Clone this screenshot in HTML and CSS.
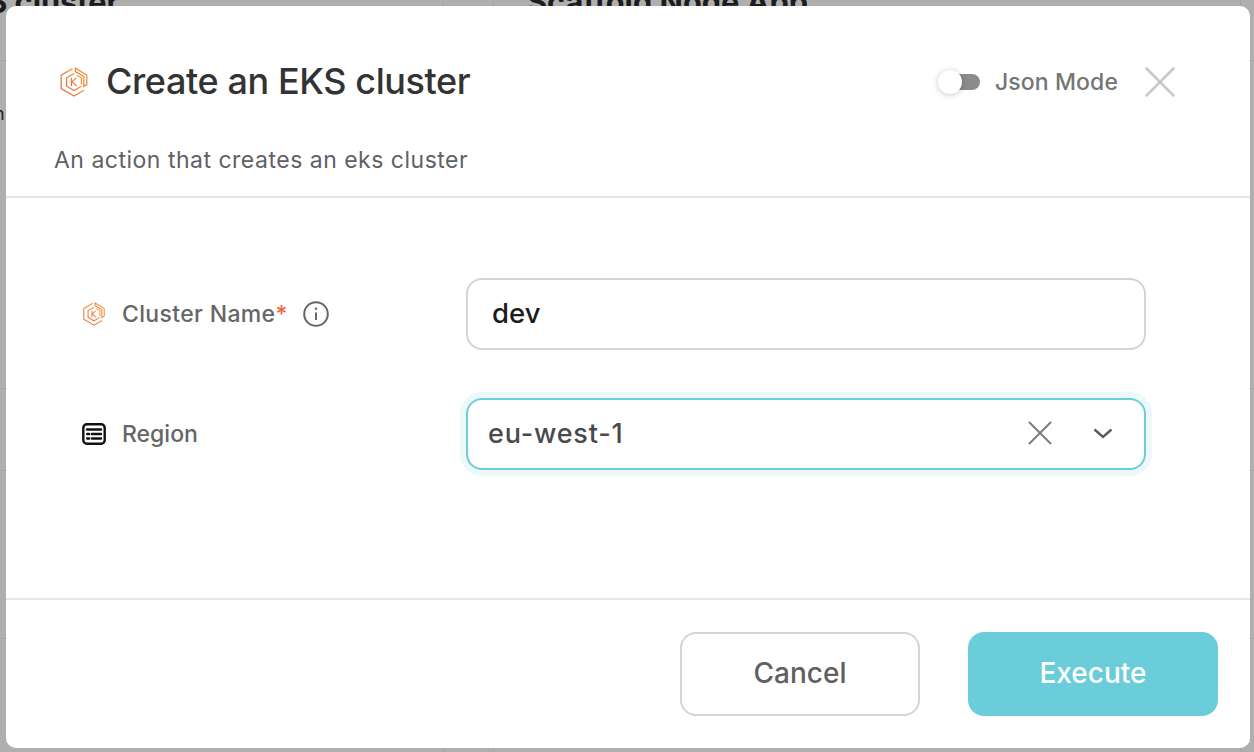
FILE: index.html
```html
<!DOCTYPE html>
<html lang="en">
<head>
<meta charset="utf-8">
<title>Create an EKS cluster</title>
<link rel="stylesheet" href="styles.css">
</head>
<body>
<div class="backdrop">
  <span class="bg-text bg-text-left">EKS cluster</span>
  <span class="bg-text bg-text-mid">Scaffold Node App</span>
  <span class="bg-frag">n</span>
  <i class="bg-v bg-v1"></i><i class="bg-v bg-v2"></i><i class="bg-v bg-v3"></i>
  <i class="bg-h bg-h1"></i><i class="bg-h bg-h2"></i><i class="bg-h bg-h3"></i><i class="bg-h bg-h4"></i>
</div>
<svg class="defs" width="0" height="0" aria-hidden="true">
  <defs>
    <linearGradient id="eks" x1="0" y1="1" x2="1" y2="0">
      <stop offset="0" stop-color="#e8694a"/>
      <stop offset="1" stop-color="#f9a63c"/>
    </linearGradient>
    <symbol id="eks-logo" viewBox="0 0 30 30">
      <path d="M13.6 1.600 2.200 8.200v13.400l12.800 7.400 10-5.800" fill="none" stroke="url(#eks)" stroke-width="1.300"/>
      <path d="M16.400 1.200v3.400l8.400 4.800v10l3-1.800V8.200z" fill="none" stroke="url(#eks)" stroke-width="1.300"/>
      <path d="M15 6.600 7.600 10.800v8.400l7.400 4.300 7.400-4.300M22.400 17.500v-6.700l-4.500-2.600" fill="none" stroke="url(#eks)" stroke-width="1.300"/>
      <path d="M12.400 10.800v8.200M17.400 10.800l-4.400 4 4.600 4.200" fill="none" stroke="url(#eks)" stroke-width="1.300"/>
    </symbol>
  </defs>
</svg>
<main class="modal">
  <header class="head">
    <div class="title-row">
      <svg class="logo-lg"><use href="#eks-logo"/></svg>
      <h1 class="title">Create an EKS cluster</h1>
      <div class="json-mode">
        <span class="switch"><span class="knob"></span></span>
        <span class="json-label">Json Mode</span>
      </div>
      <svg class="close" viewBox="0 0 30 30"><path d="M1.500 1.500 28.500 28.500M28.500 1.500 1.500 28.500"/></svg>
    </div>
    <p class="desc">An action that creates an eks cluster</p>
  </header>
  <section class="form">
    <div class="field">
      <label class="label">
        <svg class="logo-sm"><use href="#eks-logo"/></svg>
        <span class="label-name">Cluster Name<em class="req">*</em></span>
        <svg class="info" viewBox="0 0 26 26"><circle cx="13" cy="13" r="11.800"/><path d="M13 11.500V19"/><circle class="dot" cx="13" cy="7.800" r="1.200"/></svg>
      </label>
      <div class="input input-text">dev</div>
    </div>
    <div class="field">
      <label class="label">
        <svg class="list-ic" viewBox="0 0 24 24"><rect x="1.300" y="2.300" width="21.400" height="19.400" rx="3.500"/><path d="M5 7.500h14M10 12h9M10 16.500h9M5.200 12h2M5.200 16.500h2"/></svg>
        <span>Region</span>
      </label>
      <div class="input select">
        <span class="select-value">eu-west-1</span>
        <svg class="clear" viewBox="0 0 24 24"><path d="M1 1 23 23M23 1 1 23"/></svg>
        <svg class="chev" viewBox="0 0 20 11"><path d="M1.500 1.500 10 9 18.500 1.500"/></svg>
      </div>
    </div>
  </section>
  <footer class="foot">
    <button class="btn btn-cancel" type="button">Cancel</button>
    <button class="btn btn-exec" type="button">Execute</button>
  </footer>
</main>
</body>
</html>
```
FILE: styles.css
```css
* { box-sizing: border-box; }
html, body { margin: 0; height: 100%; }
body {
  width: 1254px;
  height: 752px;
  overflow: hidden;
  position: relative;
  background: #afafaf;
  font-family: "Inter", "Liberation Sans", sans-serif;
  color: #333;
}
.defs { position: absolute; }
.backdrop { position: absolute; inset: 0; overflow: hidden; }
.bg-text { position: absolute; top: -15px; font-weight: 700; font-size: 30.700px; line-height: 34px; color: #1c1c1c; white-space: nowrap; }
.bg-text-left { right: 1135px; }
.bg-text-mid { left: 527px; }
.bg-frag { position: absolute; left: -6px; top: 104px; font-size: 18px; line-height: 20px; color: #222; }
.bg-v { position: absolute; top: 0; bottom: 0; width: 1px; background: #a4a4a8; }
.bg-v1 { left: 443px; }
.bg-v2 { left: 493px; }
.bg-v3 { left: 1240px; }
.bg-h { position: absolute; left: 0; right: 0; height: 1px; background: #a4a4a8; }
.bg-h1 { top: 60px; }
.bg-h2 { top: 388px; }
.bg-h3 { top: 470px; }
.bg-h4 { top: 638px; }

.modal {
  position: absolute;
  left: 6px;
  top: 6px;
  width: 1244px;
  height: 742px;
  background: #fff;
  border-radius: 10px;
  display: flex;
  flex-direction: column;
}
.head {
  height: 192px;
  border-bottom: 2px solid #e6e6e8;
  padding: 0 48px;
}
.title-row {
  display: flex;
  align-items: center;
  height: 104px;
  padding-top: 48px;
}
.logo-lg { width: 30px; height: 30px; margin-left: 5px; flex: none; }
.title {
  margin: 0 0 2px 17px;
  font-size: 36px;
  font-weight: 500;
  letter-spacing: -0.4px;
  color: #333;
  flex: 1;
  white-space: nowrap;
}
.json-mode { display: flex; align-items: center; margin-right: 27px; }
.switch {
  position: relative;
  width: 40px;
  height: 16px;
  border-radius: 8px;
  background: #8c8c8c;
  margin-right: 15px;
}
.knob {
  position: absolute;
  left: -2px;
  top: -4px;
  width: 24px;
  height: 24px;
  border-radius: 50%;
  background: #fff;
  box-shadow: 0 1px 6px rgba(0,0,0,.22);
}
.json-label { font-size: 23px; font-weight: 500; letter-spacing: .1px; color: #757575; }
.close { width: 30px; height: 30px; margin-right: 27px; flex: none; fill: none; stroke: #c8c8c8; stroke-width: 2.500; stroke-linecap: round; }
.desc { margin: 0; padding-top: 36px; font-size: 23px; letter-spacing: .5px; line-height: 28px; color: #5f6166; white-space: nowrap; }

.form {
  height: 402px;
  padding: 80px 104px 0 76px;
  border-bottom: 2px solid #e6e6e8;
  display: flex;
  flex-direction: column;
  gap: 48px;
}
.field { display: flex; align-items: center; height: 72px; }
.label {
  width: 384px;
  display: flex;
  align-items: center;
  font-size: 23px;
  font-weight: 500;
  color: #666;
}
.label-name { letter-spacing: .33px; }
.logo-sm { width: 24px; height: 24px; margin-right: 16px; flex: none; }
.req { color: #f0663f; font-style: normal; }
.info { width: 26px; height: 26px; margin-left: 15px; fill: none; stroke: #666; stroke-width: 2; }
.info .dot { fill: #666; stroke: none; }
.list-ic { width: 24px; height: 24px; margin-right: 16px; fill: none; stroke: #111; stroke-width: 2.400; stroke-linecap: round; }
.input {
  width: 680px;
  height: 72px;
  border: 2px solid #d4d4d4;
  border-radius: 16px;
  padding: 0 24px 2px;
  display: flex;
  align-items: center;
  font-size: 27.500px;
  font-weight: 500;
  color: #1c1c1c;
}
.select {
  border-color: #6ccdda;
  box-shadow: 0 0 0 6px #ecf8fa;
  padding: 0 31px 2px 20px;
  font-size: 27px;
  letter-spacing: .8px;
  color: #4a4a4a;
}
.select-value { flex: 1; }
.clear { width: 24px; height: 24px; margin-right: 41px; fill: none; stroke: #7d7d7d; stroke-width: 2; }
.chev { width: 20px; height: 11px; fill: none; stroke: #5c5c5c; stroke-width: 2.400; }

.foot {
  flex: 1;
  display: flex;
  justify-content: flex-end;
  align-items: flex-start;
  gap: 48px;
  padding: 32px 32px 0 0;
}
.btn {
  height: 84px;
  border-radius: 16px;
  padding: 0 0 2px;
  font-family: inherit;
  font-size: 28px;
  font-weight: 500;
  cursor: pointer;
}
.btn-cancel { width: 240px; background: #fff; border: 2px solid #d4d4d4; color: #606060; }
.btn-exec { width: 250px; background: #6ccdda; border: 0; color: #fff; }
```
